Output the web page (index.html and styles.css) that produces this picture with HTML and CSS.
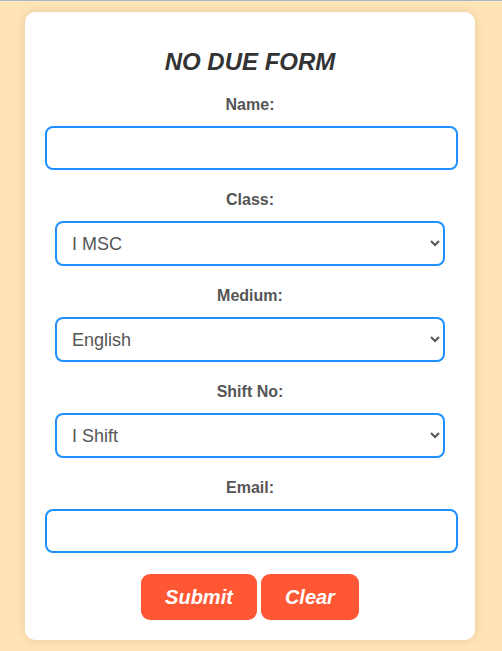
FILE: index.html
```html
<!DOCTYPE html>
<html>
<head>
<meta charset="utf-8">
<title>No Due Form</title>
<link rel="stylesheet" href="styles.css">
</head>
<body>
<form class="card">
  <h2 class="title">NO DUE FORM</h2>
  <label class="label" for="name">Name:</label>
  <input class="field field-wide" type="text" id="name">
  <label class="label" for="cls">Class:</label>
  <select class="field field-select" id="cls">
    <option>I MSC</option>
    <option>II MSC</option>
  </select>
  <label class="label" for="medium">Medium:</label>
  <select class="field field-select" id="medium">
    <option>English</option>
    <option>Tamil</option>
  </select>
  <label class="label" for="shift">Shift No:</label>
  <select class="field field-select" id="shift">
    <option>I Shift</option>
    <option>II Shift</option>
  </select>
  <label class="label" for="email">Email:</label>
  <input class="field field-wide" type="email" id="email">
  <div class="actions">
    <button class="btn" type="submit">Submit</button>
    <button class="btn" type="reset">Clear</button>
  </div>
</form>
</body>
</html>
```
FILE: styles.css
```css
html, body {
  margin: 0;
  padding: 0;
}
body {
  background: #ffe4b5;
  border-top: 1px solid #a9b7cf;
  font-family: "Liberation Sans", Arial, sans-serif;
  min-height: 650px;
  box-sizing: border-box;
  overflow: hidden;
}
.card {
  width: 450px;
  box-sizing: border-box;
  margin: 11px 0 0 25px;
  padding: 20px;
  background: #fff;
  border-radius: 10px;
  box-shadow: 0 0 10px rgba(0, 0, 0, 0.12);
  display: flex;
  flex-direction: column;
  align-items: center;
}
.title {
  margin: 16px 0 20px;
  font-size: 24px;
  line-height: 28px;
  font-weight: bold;
  font-style: italic;
  color: #333;
}
.label {
  display: block;
  font-size: 16px;
  line-height: 18px;
  font-weight: bold;
  color: #555;
  margin-bottom: 12px;
}
.field {
  box-sizing: border-box;
  height: 44px;
  border: 2px solid #1e90ff;
  border-radius: 8px;
  background: #fff;
  margin: 0 0 21px;
  font-family: "Liberation Sans", Arial, sans-serif;
  font-size: 18px;
  color: #555;
  outline: none;
}
.field-wide {
  width: 413px;
  align-self: flex-start;
  padding: 0 12px;
}
.field-select {
  width: 390px;
  height: 45px;
  padding: 0 11px;
}
.actions {
  display: flex;
  gap: 4px;
  justify-content: center;
}
.btn {
  height: 46px;
  padding: 0 24px;
  border: none;
  border-radius: 9px;
  background: #ff5733;
  color: #fff;
  font-family: "Liberation Sans", Arial, sans-serif;
  font-size: 20px;
  font-weight: bold;
  font-style: italic;
  cursor: pointer;
}
```
